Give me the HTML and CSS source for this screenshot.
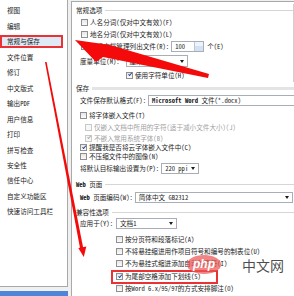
FILE: index.html
```html
<!DOCTYPE html>
<html lang="zh-CN">
<head>
    <meta charset="UTF-8">
    <meta name="viewport" content="width=device-width, initial-scale=1.0">
    <title>Word 选项</title>
    <link rel="stylesheet" href="styles.css">
</head>
<body>
    <div class="dialog">
        <aside class="side">
            <ul class="nav">
                <li>视图</li>
                <li>编辑</li>
                <li class="active">常规与保存</li>
                <li>文件位置</li>
                <li>修订</li>
                <li>中文版式</li>
                <li>输出PDF</li>
                <li>用户信息</li>
                <li>打印</li>
                <li>拼写检查</li>
                <li>安全性</li>
                <li>信任中心</li>
                <li>自定义功能区</li>
                <li>快速访问工具栏</li>
            </ul>
            <div class="side-foot"></div>
        </aside>

        <main class="pane">
            <section class="group general">
                <h3 class="head">常规选项</h3>
                <div class="row ind"><i class="box"></i>人名分词(仅对中文有效)(F)</div>
                <div class="row ind"><i class="box"></i>地名分词(仅对中文有效)(L)</div>
                <div class="row ind">
                    <i class="box on"></i>最近文档管理列出文件(R):
                    <span class="spin">100<b></b></span>
                    <span class="unit">个(E)</span>
                </div>
                <div class="row lbl h14">度量单位(M):<span class="sel w-unit">厘米</span></div>
                <div class="row deep"><i class="box on"></i>使用字符单位(H)</div>
            </section>

            <section class="group save">
                <h3 class="head">保存</h3>
                <div class="row lbl">文件保存默认格式(F):<span class="sel plain w-fmt"><b class="bm">Microsoft Word</b>&nbsp;文件(*.docx)</span></div>
                <div class="row lbl gap3"><i class="box"></i>将字体嵌入文件(T)</div>
                <div class="row sub off"><i class="box"></i>仅嵌入文档中所用的字符(适于减小文件大小)(J)</div>
                <div class="row sub off h10"><i class="box on"></i>不嵌入常用系统字体(B)</div>
                <div class="row lbl h9"><i class="box on"></i>提醒我是否将云字体嵌入文件中(C)</div>
                <div class="row lbl h9"><i class="box"></i>不压缩文件中的图像(N)</div>
                <div class="row lbl h13 gap1">将默认目标输出设置为(P):<span class="sel w-ppi">220 ppi</span></div>
            </section>

            <section class="group web">
                <h3 class="head"><b class="bm">Web</b>&nbsp;页面</h3>
                <div class="row lbl h13 gap1"><b class="bm">Web</b>&nbsp;页面编码(W):<span class="sel w-enc">简体中文 GB2312</span></div>
            </section>

            <section class="group compat">
                <h3 class="head">兼容性选项</h3>
                <div class="row lbl h11">应用于(Y):<span class="sel w-doc">文档1</span></div>
                <div class="row opt gap4"><i class="box"></i>按分页符和段落标记(A)</div>
                <div class="row opt"><i class="box"></i>不将悬挂缩进用作项目符号和编号的制表位(U)</div>
                <div class="row opt h125"><i class="box"></i>不为悬挂式缩进添加自动制表符(I)</div>
                <div class="row opt h14"><span class="flag"><i class="box on"></i>为尾部空格添加下划线(S)</span></div>
                <div class="row opt h10"><i class="box"></i>按Word 6.x/95/97的方式安排脚注(O)</div>
            </section>
        </main>

        <!-- 标注：红色箭头 -->
        <svg class="marks" width="294" height="296" viewBox="0 0 294 296">
            <polygon points="75,40 110,45 209,74 208,78 103,57 96,62" fill="#f40a0a"/>
            <polygon points="45,62 46.6,62 83.6,250 80.4,250" fill="#f40a0a"/>
            <polygon points="78.3,248 86.3,246.5 83.8,257" fill="#f40a0a"/>
        </svg>

        <div class="logo">
            <span class="php">php</span>
            <span class="cn">中文网</span>
        </div>
    </div>
</body>
</html>
```

FILE: styles.css
```css
*{
    margin: 0;
    padding: 0;
}
body{
    background: #f0f0f0;
    font: 6.6px/1 "Noto Sans CJK SC", sans-serif;
    font-feature-settings: "hwid" 1;
    color: #1b1b1b;
}
.dialog{
    position: relative;
    display: flex;
    width: 294px;
    height: 296px;
    overflow: hidden;
}

/* 左侧目录 */
.side{
    width: 68px;
    flex: none;
    display: flex;
    flex-direction: column;
}
.nav{
    list-style: none;
    height: 287px;
    padding-top: 4px;
    box-sizing: border-box;
    background: #fff;
    border-right: 1px solid #a9a9a9;
    border-bottom: 1px solid #a9a9a9;
}
.nav li{
    width: 63px;
    height: 13.46px;
    margin-bottom: 2px;
    box-sizing: border-box;
    border: 2px solid transparent;
    padding-left: 5px;
    display: flex;
    align-items: center;
    white-space: nowrap;
}
.nav li.active{
    background: #dfe9f6;
    border-color: #ea3234;
}
.side-foot{
    margin-top: 4px;
    height: 5px;
    background: #4d86d8;
}

/* 右侧设置区 */
.pane{
    flex: 1;
    min-width: 0;
    margin: 1px 0 0 3px;
    padding-left: 4px;
    border-left: 1px solid #a9a9a9;
    border-top: 1px solid #a9a9a9;
    background: #fff;
    overflow: hidden;
}
.general{
    border-right: 1px solid #cfcfcf;
    padding-bottom: 1px;
}
.head{
    display: flex;
    align-items: center;
    height: 12px;
    font-size: inherit;
    font-weight: normal;
    white-space: nowrap;
}
.head::after{
    content: "";
    flex: 1;
    margin-left: 3px;
    border-top: 1px solid #d6d6d6;
}
.general .head{
    margin-top: 2px;
}
.save .head::after{
    border-top: 3px solid #e4e4e4;
}
.web .head{
    margin-top: 3px;
}
.compat .head{
    margin-top: 2px;
}

.row{
    display: flex;
    align-items: center;
    height: 12px;
    white-space: nowrap;
}
.ind{ padding-left: 5px; }
.lbl{ padding-left: 4px; }
.sub{ padding-left: 9px; }
.deep{ padding-left: 50px; }
.opt{ padding-left: 40px; }
.off{ color: #9f9f9f; }
.h9{ height: 9px; }
.h10{ height: 10px; }
.h11{ height: 11px; }
.h125{ height: 12.5px; }
.h13{ height: 13px; }
.h14{ height: 14px; }
.gap1{ margin-top: 1px; }
.gap3{ margin-top: 3px; }
.gap4{ margin-top: 4px; }
.general .h14{ margin-top: 2px; }
.general .deep{ margin-top: 1px; }

.bm{
    font-weight: bold;
}

/* 复选框 */
.box{
    position: relative;
    flex: none;
    width: 7px;
    height: 7px;
    margin-right: 2px;
    box-sizing: border-box;
    border: 1px solid #8d8f91;
    background: linear-gradient(#e6e6e6, #fbfbfb);
}
.off .box{
    border-color: #c9c9c9;
    background: #f7f7f7;
}
.box.on::after{
    content: "";
    position: absolute;
    left: 1.6px;
    top: -0.2px;
    width: 1.4px;
    height: 3.4px;
    border: solid #21419a;
    border-width: 0 1px 1px 0;
    transform: rotate(40deg);
}
.off .box.on::after{
    border-color: #a8a8a8;
}

/* 输入框、下拉框 */
.spin{
    display: flex;
    align-items: center;
    width: 33px;
    height: 11px;
    margin-left: 2px;
    padding-left: 3px;
    box-sizing: border-box;
    border: 1px solid #a7aeb8;
    background: #fff;
}
.spin b{
    margin-left: auto;
    width: 8px;
    height: 100%;
    border-left: 1px solid #b9c7da;
    background: linear-gradient(#edf3fb 50%, #d3e1f3 50%);
}
.unit{
    margin-left: 3px;
}
.sel{
    display: flex;
    align-items: center;
    flex: none;
    height: 11px;
    margin-left: 2px;
    padding: 0 3px;
    box-sizing: border-box;
    border: 1px solid #a7aeb8;
    background: #fff;
}
.sel::after{
    content: "";
    margin-left: auto;
    border-left: 2px solid transparent;
    border-right: 2px solid transparent;
    border-top: 3px solid #1b1b1b;
}
.sel.plain::after{
    display: none;
}
.w-unit{ width: 62px; height: 12px; margin-left: 6px; }
.w-fmt{ width: 150px; }
.w-ppi{ width: 38px; }
.w-enc{ width: 158px; }
.w-doc{ width: 61px; margin-left: 3px; }

.flag{
    display: flex;
    align-items: center;
    width: 107px;
    height: 14px;
    margin-left: -5px;
    padding-left: 3px;
    box-sizing: border-box;
    border: 2px solid #ea3234;
}

/* 覆盖层：箭头和水印 */
.marks{
    position: absolute;
    left: 0;
    top: 0;
    pointer-events: none;
}
.logo{
    position: absolute;
    left: 187px;
    top: 255px;
    display: flex;
    align-items: center;
    pointer-events: none;
}
.php{
    width: 34px;
    height: 19px;
    border-radius: 50%;
    background: rgba(236, 84, 84, 0.72);
    color: #fff;
    font: italic bold 12px/19px "Liberation Sans", sans-serif;
    text-align: center;
}
.cn{
    margin-left: 21px;
    font: 14px/1 "Noto Sans CJK SC", sans-serif;
    color: rgba(45, 45, 45, 0.85);
}
```
